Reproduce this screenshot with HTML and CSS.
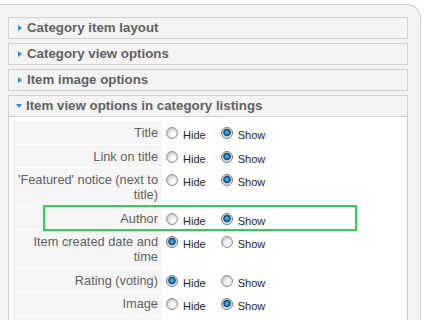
FILE: index.html
```html
<!DOCTYPE html>
<html lang="en">

<head>
    <meta charset="UTF-8">
    <title>Item view options</title>
    <link rel="stylesheet" href="styles.css">
</head>

<body>

    <div class="params">
        <div class="pane">
            <h3 class="pane-title"><span class="arrow"></span>Category item layout</h3>
        </div>
        <div class="pane">
            <h3 class="pane-title"><span class="arrow"></span>Category view options</h3>
        </div>
        <div class="pane">
            <h3 class="pane-title"><span class="arrow"></span>Item image options</h3>
        </div>
        <div class="pane open">
            <h3 class="pane-title"><span class="arrow"></span>Item view options in category listings</h3>
            <div class="pane-body">
                <table class="paramlist">
                    <tr>
                        <td class="key">Title</td>
                        <td class="value">
                            <label class="opt"><input type="radio" name="title">Hide</label>
                            <label class="opt"><input type="radio" name="title" checked>Show</label>
                        </td>
                    </tr>
                    <tr>
                        <td class="key">Link on title</td>
                        <td class="value">
                            <label class="opt"><input type="radio" name="link">Hide</label>
                            <label class="opt"><input type="radio" name="link" checked>Show</label>
                        </td>
                    </tr>
                    <tr>
                        <td class="key">'Featured' notice (next to title)</td>
                        <td class="value">
                            <label class="opt"><input type="radio" name="featured">Hide</label>
                            <label class="opt"><input type="radio" name="featured" checked>Show</label>
                        </td>
                    </tr>
                    <tr>
                        <td class="key">Author</td>
                        <td class="value">
                            <label class="opt"><input type="radio" name="author">Hide</label>
                            <label class="opt"><input type="radio" name="author" checked>Show</label>
                        </td>
                    </tr>
                    <tr>
                        <td class="key">Item created date and time</td>
                        <td class="value">
                            <label class="opt"><input type="radio" name="created" checked>Hide</label>
                            <label class="opt"><input type="radio" name="created">Show</label>
                        </td>
                    </tr>
                    <tr>
                        <td class="key">Rating (voting)</td>
                        <td class="value">
                            <label class="opt"><input type="radio" name="rating" checked>Hide</label>
                            <label class="opt"><input type="radio" name="rating">Show</label>
                        </td>
                    </tr>
                    <tr>
                        <td class="key">Image</td>
                        <td class="value">
                            <label class="opt"><input type="radio" name="image">Hide</label>
                            <label class="opt"><input type="radio" name="image" checked>Show</label>
                        </td>
                    </tr>
                    <tr>
                        <td class="key">&nbsp;</td>
                        <td class="value"></td>
                    </tr>
                </table>
            </div><!--pane-body end-->
        </div><!--open pane end-->
    </div><!--params end-->

    <div class="highlight"></div>

</body>

</html>
```

FILE: styles.css
```css
body {
    margin: 0;
    background: #fff;
    font-family: "Liberation Sans", Arial, sans-serif;
    overflow: hidden;
}

.params {
    height: 400px;
    margin: 4px 10px 0 -20px;
    padding: 12px 12px 0 27px;
    background: #f3f3f3;
    border: 1px solid #cdcdcd;
    border-bottom: none;
    border-radius: 0 14px 0 0;
}

.pane {
    margin-bottom: 4px;
    background: #f3f3f3;
    border: 1px solid #d2d2d2;
}

.pane-title {
    margin: 0;
    height: 20px;
    padding-left: 9px;
    line-height: 20px;
    font-size: 13.3px;
    font-weight: bold;
    color: #626262;
}

.arrow {
    display: inline-block;
    width: 0;
    height: 0;
    margin-right: 5px;
    vertical-align: middle;
    border-left: 4px solid #2f8ee0;
    border-top: 3.5px solid transparent;
    border-bottom: 3.5px solid transparent;
}

.open .arrow {
    margin-left: -2px;
    margin-right: 4px;
    border-top: 4px solid #2f8ee0;
    border-left: 3.5px solid transparent;
    border-right: 3.5px solid transparent;
    border-bottom: none;
}

.pane-body {
    padding: 4px 3px 0;
    background: #fff;
    border-top: 1px solid #d2d2d2;
}

.paramlist {
    width: 100%;
    border-collapse: separate;
    border-spacing: 0;
}

.key {
    box-sizing: border-box;
    width: 150px;
    padding: 4px 4px 3.5px 4px;
    text-align: right;
    vertical-align: top;
    font-size: 12.8px;
    line-height: 15px;
    color: #616161;
    background: #f5f5f5;
    border-bottom: 1px solid #fff;
}

.value {
    padding: 6px 0 0 4px;
    vertical-align: top;
    font-size: 11px;
    line-height: 15px;
    color: #1e1e2a;
}

.opt {
    margin-right: 12px;
}

.opt input {
    -webkit-appearance: none;
    appearance: none;
    box-sizing: border-box;
    width: 12px;
    height: 12px;
    margin: 0 5px 0 0;
    border: 1px solid #909090;
    border-radius: 50%;
    background: radial-gradient(circle at 60% 65%, #fff 0, #f1f1f1 3px, #cdcdcd 6px);
}

.opt input:checked {
    border-color: #7a7a7a;
    background: radial-gradient(circle at 50% 45%, #72c6f2 0, #1a80c0 2px, #0b4a78 3.3px, #d6d6d6 4.2px, #f2f2f2 6px);
}

/* green box round the Author row */
.highlight {
    position: absolute;
    left: 43px;
    top: 205px;
    width: 314px;
    height: 26px;
    box-sizing: border-box;
    border: 2px solid #22d64e;
}
```
